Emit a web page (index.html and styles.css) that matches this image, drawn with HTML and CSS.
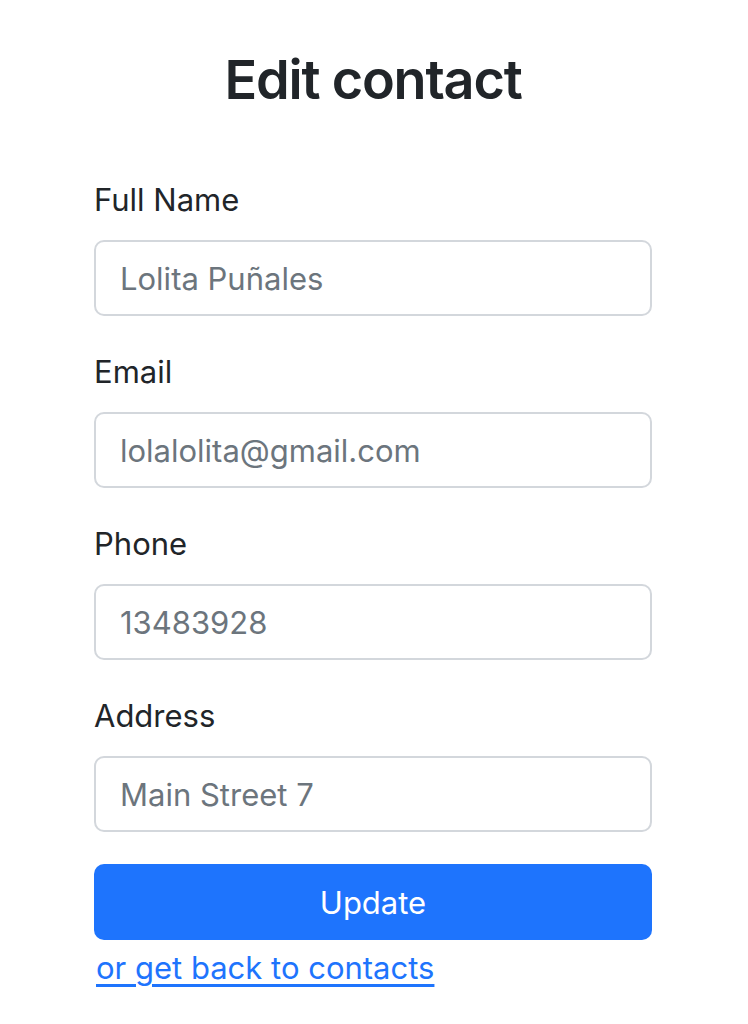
FILE: index.html
```html
<!DOCTYPE html>
<html lang="en">
<head>
<meta charset="utf-8">
<title>Edit contact</title>
<link rel="stylesheet" href="styles.css">
</head>
<body>
<main class="page">
  <h1 class="title">Edit contact</h1>
  <form class="form">
    <div class="field">
      <label class="label" for="name">Full Name</label>
      <input class="input" id="name" type="text" value="Lolita Puñales">
    </div>
    <div class="field">
      <label class="label" for="email">Email</label>
      <input class="input" id="email" type="text" value="lolalolita@gmail.com">
    </div>
    <div class="field">
      <label class="label" for="phone">Phone</label>
      <input class="input" id="phone" type="text" value="13483928">
    </div>
    <div class="field">
      <label class="label" for="address">Address</label>
      <input class="input" id="address" type="text" value="Main Street 7">
    </div>
    <button class="button" type="button">Update</button>
    <a class="back" href="#">or get back to contacts</a>
  </form>
</main>
</body>
</html>
```

FILE: styles.css
```css
* { box-sizing: border-box; }
html, body { margin: 0; padding: 0; background: #fff; }
body {
  font-family: "Inter", "Liberation Sans", sans-serif;
  color: #212529;
}
.page {
  width: 558px;
  margin: 0 0 0 94px;
  padding-top: 47px;
}
.title {
  margin: 0 0 63px;
  font-size: 54px;
  font-weight: 600;
  line-height: 66px;
  text-align: center;
  letter-spacing: -1.2px;
}
.form { display: flex; flex-direction: column; }
.field { display: flex; flex-direction: column; margin-bottom: 32px; }
.label {
  font-size: 31px;
  line-height: 48px;
  margin-bottom: 16px;
  color: #212529;
}
.input {
  height: 76px;
  border: 2px solid #d3d7dc;
  border-radius: 10px;
  padding: 0 24px;
  font-family: inherit;
  font-size: 31px;
  color: #6c757d;
  background: #fff;
  outline: none;
}
.button {
  height: 76px;
  border: none;
  border-radius: 10px;
  background: #1e74fd;
  color: #fff;
  font-family: inherit;
  font-size: 31px;
  padding: 0;
}
.back {
  align-self: flex-start;
  margin-left: 2px;
  margin-top: 4px;
  font-size: 31px;
  line-height: 48px;
  color: #1e74fd;
  text-decoration: underline;
  text-decoration-thickness: 3px;
  text-underline-offset: 5px;
}
```
